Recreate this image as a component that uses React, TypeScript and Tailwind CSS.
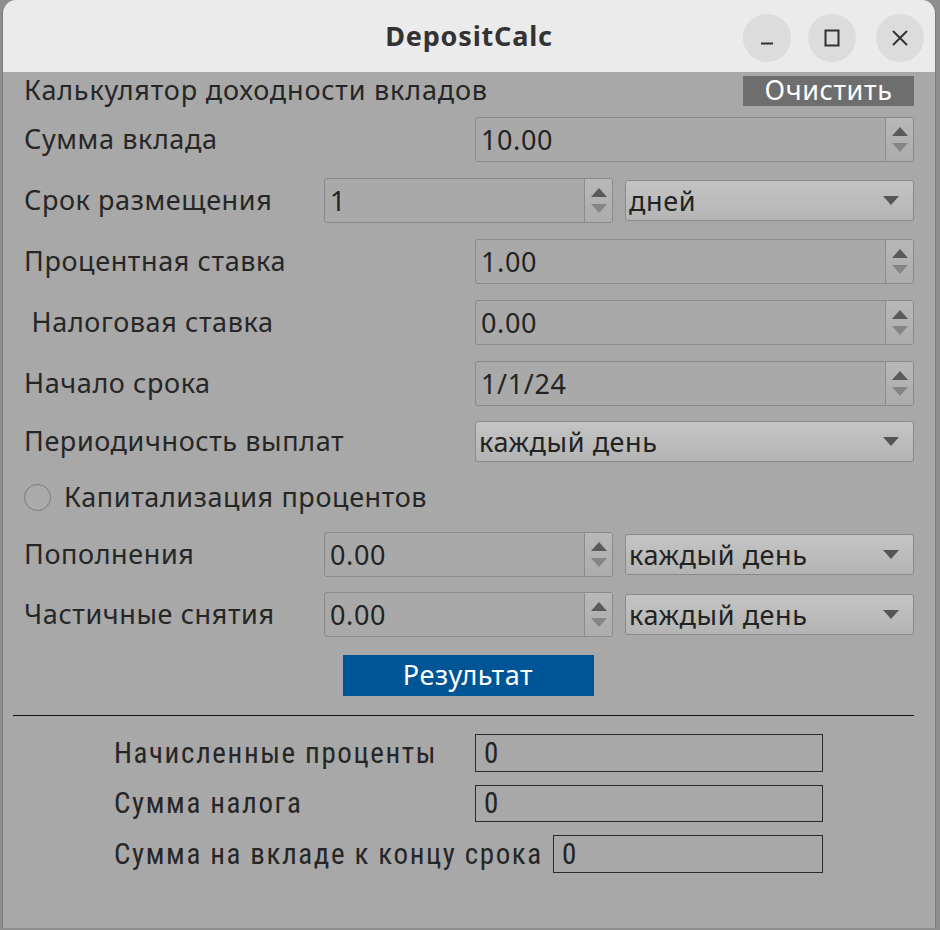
import React from "react";

const font = { fontFamily: "'Noto Sans', 'Open Sans', sans-serif" };
const narrow = { fontFamily: "'Liberation Sans Narrow', 'Roboto Condensed', 'Noto Sans', sans-serif" };

const SpinArrows = () => (
  <div className="flex h-full w-[28px] flex-col items-center justify-center gap-[7px] border-l border-[#8c8c8c] bg-gradient-to-b from-[#b8b8b8] to-[#acacac]">
    <svg width="16" height="9" viewBox="0 0 16 9">
      <path d="M8 0 L16 9 L0 9 Z" fill="#5a5a5a" />
    </svg>
    <svg width="16" height="9" viewBox="0 0 16 9">
      <path d="M0 0 L16 0 L8 9 Z" fill="#858585" />
    </svg>
  </div>
);

const SpinBox = ({ value, className = "" }: { value: string; className?: string }) => (
  <div
    className={`flex h-[45px] items-center overflow-hidden rounded-[3px] border border-[#8a8a8a] bg-[#a9a9a9] ${className}`}
  >
    <div className="flex-1 pl-[5px] text-[27px] leading-none tracking-[0.6px] text-[#232323]">{value}</div>
    <SpinArrows />
  </div>
);

const Combo = ({ value, className = "" }: { value: string; className?: string }) => (
  <div
    className={`flex h-[41px] items-center rounded-[3px] border border-[#8a8a8a] bg-gradient-to-b from-[#c4c4c4] to-[#b4b4b4] pr-[14px] ${className}`}
  >
    <div className="flex-1 pl-[3px] text-[27px] leading-none tracking-[0.6px] text-[#232323]">{value}</div>
    <svg width="16" height="9" viewBox="0 0 16 9">
      <path d="M0 0 L16 0 L8 9 Z" fill="#555555" />
    </svg>
  </div>
);

const Row = ({
  label,
  h,
  children,
}: {
  label: string;
  h: string;
  children: React.ReactNode;
}) => (
  <div className={`flex items-center ${h}`}>
    <div className="w-[451px] whitespace-pre text-[27px] tracking-[0.6px] text-[#262626]">{label}</div>
    <div className="flex-1">{children}</div>
  </div>
);

const SplitRow = ({ label, value, unit, h }: { label: string; value: string; unit: string; h: string }) => (
  <div className={`flex items-center ${h}`}>
    <div className="w-[300px] text-[27px] tracking-[0.6px] text-[#262626]">{label}</div>
    <SpinBox value={value} className="w-[289px]" />
    <Combo value={unit} className="ml-[12px] w-[289px]" />
  </div>
);

const ResultRow = ({ label, labelW, boxW, h }: { label: string; labelW: string; boxW: string; h: string }) => (
  <div className={`flex items-center ${h}`}>
    <div className={`${labelW} text-[29px] leading-none tracking-[1.6px] text-[#262626]`} style={narrow}>
      {label}
    </div>
    <div
      className={`${boxW} h-full flex items-center border border-[#2a2a2a] pl-[8px] text-[29px] leading-none text-[#232323]`}
      style={narrow}
    >
      0
    </div>
  </div>
);

export default function App() {
  return (
    <div className="h-[930px] w-[940px] overflow-hidden bg-[#8e8e8e]" style={font}>
      <div className="ml-[2px] h-[928px] w-[934px] overflow-hidden rounded-t-[14px] border-l border-r border-[#7c7c7c] bg-[#a8a8a8]">
        {/* title bar */}
        <div className="relative flex h-[72px] items-center justify-center bg-[#ebebeb]">
          <div className="text-[27px] font-bold tracking-[0.8px] text-[#333333]">DepositCalc</div>
          <div className="absolute right-[11px] top-[14px] flex">
            <div className="flex h-[48px] w-[48px] items-center justify-center rounded-full bg-[#dcdcdc]">
              <svg width="16" height="16" viewBox="0 0 16 16">
                <path d="M2 13.5 H14" stroke="#333" strokeWidth="2" />
              </svg>
            </div>
            <div className="ml-[17px] flex h-[48px] w-[48px] items-center justify-center rounded-full bg-[#dcdcdc]">
              <svg width="16" height="18" viewBox="0 0 16 18">
                <rect x="1.5" y="1.5" width="13" height="15" fill="none" stroke="#333" strokeWidth="2" />
              </svg>
            </div>
            <div className="ml-[20px] flex h-[48px] w-[48px] items-center justify-center rounded-full bg-[#dcdcdc]">
              <svg width="18" height="18" viewBox="0 0 18 18">
                <path d="M2 2 L16 16 M16 2 L2 16" stroke="#333" strokeWidth="2" />
              </svg>
            </div>
          </div>
        </div>

        <div className="pl-[21px] pr-[21px]">
          <div className="flex h-[37px] items-center justify-between">
            <div className="text-[27px] tracking-[0.8px] text-[#262626]">Калькулятор доходности вкладов</div>
            <div className="flex h-[30px] w-[171px] items-center justify-center bg-[#6e6e6e] text-[27px] tracking-[0.6px] text-white">
              Очистить
            </div>
          </div>

          <Row label="Сумма вклада" h="h-[61px]">
            <SpinBox value="10.00" />
          </Row>
          <SplitRow label="Срок размещения" value="1" unit="дней" h="h-[61px]" />
          <Row label="Процентная ставка" h="h-[61px]">
            <SpinBox value="1.00" />
          </Row>
          <Row label=" Налоговая ставка" h="h-[61px]">
            <SpinBox value="0.00" />
          </Row>
          <Row label="Начало срока" h="h-[61px]">
            <SpinBox value="1/1/24" />
          </Row>
          <Row label="Периодичность выплат" h="h-[55px]">
            <Combo value="каждый день" />
          </Row>

          <div className="flex h-[56px] items-center gap-[13px]">
            <div className="h-[27px] w-[27px] rounded-full border border-[#7a7a7a] bg-[#aaaaaa]" />
            <div className="text-[27px] tracking-[0.6px] text-[#262626]">Капитализация процентов</div>
          </div>

          <SplitRow label="Пополнения" value="0.00" unit="каждый день" h="h-[59px]" />
          <SplitRow label="Частичные снятия" value="0.00" unit="каждый день" h="h-[61px]" />

          <div className="mt-[10px] flex justify-center">
            <div className="ml-[-2px] flex h-[41px] w-[251px] items-center justify-center bg-[#005596] text-[27px] tracking-[0.6px] text-white">
              Результат
            </div>
          </div>

          <div className="ml-[-11px] mt-[19px] h-[1px] bg-[#111111]" />

          <div className="mt-[18px] flex flex-col gap-[13px] pl-[90px]">
            <ResultRow label="Начисленные проценты" labelW="w-[361px]" boxW="w-[348px]" h="h-[38px]" />
            <ResultRow label="Сумма налога" labelW="w-[361px]" boxW="w-[348px]" h="h-[37px]" />
            <ResultRow label="Сумма на вкладе к концу срока" labelW="w-[439px]" boxW="w-[270px]" h="h-[38px]" />
          </div>
        </div>
      </div>
    </div>
  );
}
